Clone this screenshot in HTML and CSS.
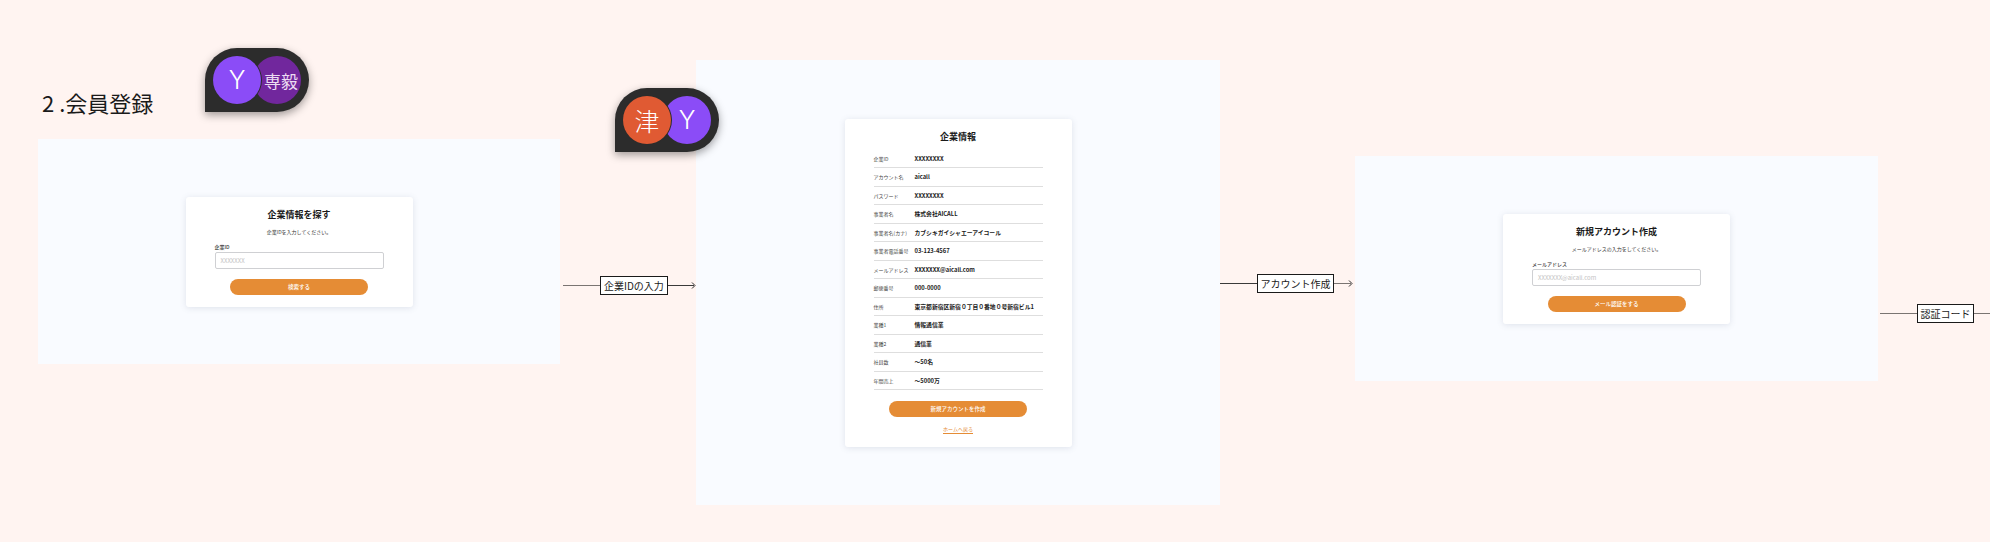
FILE: index.html
```html
<!DOCTYPE html>
<html lang="ja">
  <head>
    <meta charset="utf-8" />
    <title>会員登録</title>
    <link rel="stylesheet" href="styles.css">
  </head>
  <body>
    <h1 class="flow-title">2 .会員登録</h1>

    <!-- step 1 -->
    <section class="frame frame-search">
      <div class="card card-form">
        <h2 class="card-title">企業情報を探す</h2>
        <p class="card-lead">企業IDを入力してください。</p>
        <label class="field-label">企業ID</label>
        <div class="field-input">XXXXXXX</div>
        <button type="button" class="primary-btn">検索する</button>
      </div>
    </section>

    <!-- step 2 -->
    <section class="frame frame-company">
      <div class="card card-table">
        <h2 class="card-title">企業情報</h2>
        <dl class="info-list">
          <div class="info-row"><dt>企業ID</dt><dd>XXXXXXXX</dd></div>
          <div class="info-row"><dt>アカウント名</dt><dd>aicall</dd></div>
          <div class="info-row"><dt>パスワード</dt><dd>XXXXXXXX</dd></div>
          <div class="info-row"><dt>事業者名</dt><dd>株式会社AICALL</dd></div>
          <div class="info-row"><dt>事業者名(カナ)</dt><dd>カブシキガイシャエーアイコール</dd></div>
          <div class="info-row"><dt>事業者電話番号</dt><dd>03-123-4567</dd></div>
          <div class="info-row"><dt>メールアドレス</dt><dd>XXXXXXX@aicall.com</dd></div>
          <div class="info-row"><dt>郵便番号</dt><dd>000-0000</dd></div>
          <div class="info-row"><dt>住所</dt><dd>東京都新宿区新宿０丁目０番地０号新宿ビル1</dd></div>
          <div class="info-row"><dt>業種1</dt><dd>情報通信業</dd></div>
          <div class="info-row"><dt>業種2</dt><dd>通信業</dd></div>
          <div class="info-row"><dt>社員数</dt><dd>～50名</dd></div>
          <div class="info-row"><dt>年間売上</dt><dd>～5000万</dd></div>
        </dl>
        <button type="button" class="primary-btn">新規アカウントを作成</button>
        <a class="home-link">ホームへ戻る</a>
      </div>
    </section>

    <!-- step 3 -->
    <section class="frame frame-account">
      <div class="card card-form">
        <h2 class="card-title">新規アカウント作成</h2>
        <p class="card-lead">メールアドレスの入力をしてください。</p>
        <label class="field-label">メールアドレス</label>
        <div class="field-input">XXXXXXX@aicall.com</div>
        <button type="button" class="primary-btn">メール認証をする</button>
      </div>
    </section>

    <div class="connector connector-one">
      <span class="line line-a"></span>
      <span class="connector-label">企業IDの入力</span>
      <span class="line line-b"></span>
      <svg class="arrow-head" width="5" height="7" viewBox="0 0 5 7"><path d="M1 .5 4 3.5 1 6.5" fill="none" stroke="#2c2c2c" stroke-width="1"/></svg>
    </div>

    <div class="connector connector-two">
      <span class="line line-c"></span>
      <span class="connector-label">アカウント作成</span>
      <span class="line line-d"></span>
      <svg class="arrow-head" width="5" height="7" viewBox="0 0 5 7"><path d="M1 .5 4 3.5 1 6.5" fill="none" stroke="#2c2c2c" stroke-width="1"/></svg>
    </div>

    <div class="connector connector-three">
      <span class="line line-e"></span>
      <span class="connector-label">認証コード</span>
      <span class="line line-f"></span>
    </div>

    <!-- comment pins on the canvas -->
    <div class="pin pin-one">
      <span class="avatar avatar-purple avatar-top">Y</span>
      <span class="avatar avatar-plum avatar-under">専毅</span>
    </div>
    <div class="pin pin-two">
      <span class="avatar avatar-red avatar-top">津</span>
      <span class="avatar avatar-purple avatar-under">Y</span>
    </div>
  </body>
</html>
```

FILE: styles.css
```css
body {
  position: relative;
  overflow: hidden;
  width: 1990px;
  height: 542px;
  margin: 0;
  padding: 0;
  background: #fff4f1;
  color: #1a1a1a;
  font-family: "Noto Sans CJK JP", "Noto Sans", sans-serif;
}

/* everything at the top level sits on a free design canvas */
.flow-title {
  position: absolute;
  left: 42px;
  top: 84px;
  margin: 0;
  font-size: 22px;
  line-height: 36px;
  font-weight: 400;
  white-space: pre;
}

.frame {
  position: absolute;
  display: flex;
  align-items: center;
  justify-content: center;
  background: #f9fbff;
}

.frame-search {
  left: 38px;
  top: 139px;
  width: 522px;
  height: 225px;
}

.frame-company {
  left: 696px;
  top: 60px;
  width: 524px;
  height: 445px;
}

.frame-account {
  left: 1355px;
  top: 156px;
  width: 523px;
  height: 225px;
}

.card {
  display: flex;
  flex-direction: column;
  box-sizing: border-box;
  width: 227px;
  background: #fff;
  border-radius: 3px;
  box-shadow: 0 1px 6px rgba(90, 100, 130, 0.16);
}

.card-form {
  height: 110px;
  padding: 11px 29px 0;
}

.card-table {
  height: 328px;
  padding: 11px 29px 0;
}

.card-title {
  margin: 0;
  font-size: 9px;
  line-height: 14px;
  font-weight: 700;
  text-align: center;
}

.card-lead {
  margin: 6.5px 0 0;
  font-size: 5px;
  line-height: 8px;
  color: #333;
  text-align: center;
}

.field-label {
  margin-top: 6.5px;
  font-size: 5px;
  line-height: 8px;
  font-weight: 500;
  color: #333;
}

.field-input {
  box-sizing: border-box;
  height: 17px;
  margin-top: 1px;
  padding-left: 5px;
  border: 1px solid #cfd0d3;
  border-radius: 2px;
  font-size: 6px;
  line-height: 15px;
  color: #c4c4c4;
}

.primary-btn {
  display: block;
  align-self: center;
  width: 138px;
  height: 16px;
  margin-top: 10px;
  padding: 0;
  border: 0;
  border-radius: 8px;
  background: #e58c35;
  color: #fff;
  font-family: inherit;
  font-size: 5.5px;
  font-weight: 500;
}

.info-list {
  margin: 6px 0 0;
}

.info-row {
  display: flex;
  align-items: center;
  height: 18.5px;
  box-sizing: border-box;
  border-bottom: 1px solid #dedede;
}

.info-row dt {
  width: 41px;
  flex: none;
  font-size: 5px;
  color: #444;
  white-space: nowrap;
}

.info-row dd {
  margin: 0;
  font-size: 5.8px;
  font-weight: 700;
  white-space: nowrap;
}

.card-table .primary-btn {
  margin-top: 11px;
}

.home-link {
  align-self: center;
  margin-top: 8px;
  padding-bottom: 1px;
  border-bottom: 1px solid #e58c35;
  font-size: 5px;
  line-height: 7px;
  color: #e58c35;
}

.connector {
  position: absolute;
  display: flex;
  align-items: center;
  height: 19px;
}

.connector-one {
  left: 563px;
  top: 276px;
}

.connector-two {
  left: 1220px;
  top: 274px;
}

.connector-three {
  left: 1880px;
  top: 304px;
}

.line {
  display: block;
  height: 1px;
  background: #3a3a3a;
}

.line-a { width: 37px; background: #7a7472; }
.line-b { width: 26px; }
.line-c { width: 37px; }
.line-d { width: 17px; background: #7a7472; }
.line-e { width: 37px; background: #7a7472; }
.line-f { width: 16px; background: #7a7472; }

.arrow-head {
  flex: none;
  margin-left: -3px;
}

.connector-label {
  box-sizing: border-box;
  height: 19px;
  padding: 0 3px;
  border: 1px solid #1a1a1a;
  background: #fff;
  font-size: 10px;
  line-height: 17px;
  white-space: nowrap;
}

.connector-two .connector-label,
.connector-three .connector-label {
  padding: 0 2.5px;
}

.pin {
  position: absolute;
  display: flex;
  box-sizing: border-box;
  width: 104px;
  height: 64px;
  padding: 8px;
  background: #2c2c2c;
  border-radius: 32px 32px 32px 0;
  box-shadow: 0 3px 8px rgba(0, 0, 0, 0.38);
}

.pin-one {
  left: 205px;
  top: 48px;
}

.pin-two {
  left: 615px;
  top: 88px;
}

.avatar {
  display: flex;
  flex: none;
  align-items: center;
  justify-content: center;
  box-sizing: border-box;
  width: 48px;
  height: 48px;
  border-radius: 50%;
  color: #fff;
  font-size: 25px;
  font-weight: 300;
  white-space: nowrap;
}

.avatar-top {
  position: relative;
  z-index: 1;
  box-shadow: 0 0 0 1px #2c2c2c;
}

.avatar-under {
  margin-left: -8px;
}

.avatar-purple {
  background: #8b4cf7;
  font-family: Inter, "Noto Sans", sans-serif;
}

.avatar-plum {
  background: #71279d;
  padding-left: 8px;
  color: #ecdcf2;
  font-size: 17px;
  font-weight: 400;
}

.avatar-red {
  background: #e05a33;
}
```
